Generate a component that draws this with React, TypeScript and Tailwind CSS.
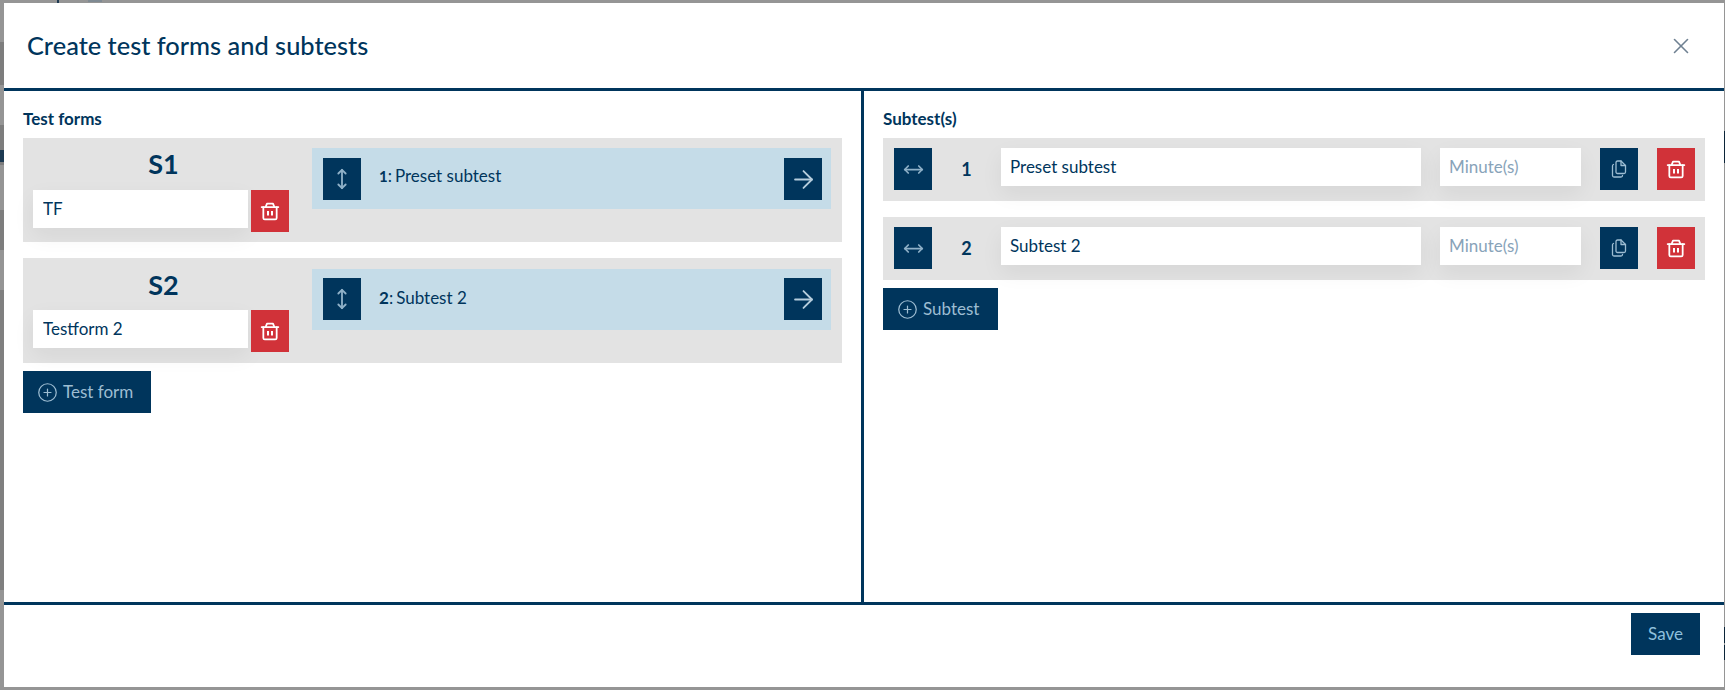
import { ArrowRight, CirclePlus, MoveHorizontal, MoveVertical, X } from "lucide-react";

const font = { fontFamily: '"Lato", "Open Sans", sans-serif' };

function TrashIcon() {
  return (
    <svg width="20" height="20" viewBox="0 0 18 18" fill="none" stroke="#ffffff" strokeWidth="1.6" strokeLinecap="round" strokeLinejoin="round">
      <path d="M1.5 5.5h15" />
      <path d="M5 5.5l1.3-3.2h5.4L13 5.5" />
      <path d="M3 5.5v9.7a1.3 1.3 0 0 0 1.3 1.3h9.4a1.3 1.3 0 0 0 1.3-1.3V5.5" />
      <path d="M7.2 9v4M10.8 9v4" strokeWidth="1.8" strokeLinecap="butt" />
    </svg>
  );
}

function CopyIcon() {
  return (
    <svg width="16" height="18" viewBox="0 0 16 18" fill="none" stroke="#9dbdd2" strokeWidth="1.3" strokeLinecap="round" strokeLinejoin="round">
      <path d="M5 2.5A1.5 1.5 0 0 1 6.5 1H10l4.5 4.5v6.5a1.5 1.5 0 0 1-1.5 1.5H6.5A1.5 1.5 0 0 1 5 12z" />
      <path d="M10 1v4.5h4.5" />
      <path d="M2.5 4.5A1.5 1.5 0 0 0 1.5 6v9.5A1.5 1.5 0 0 0 3 17h7a1.5 1.5 0 0 0 1.5-1.5" />
    </svg>
  );
}

function IconButton({ children, red }: { children: React.ReactNode; red?: boolean }) {
  return (
    <button className={`flex h-[42px] w-[38px] shrink-0 items-center justify-center ${red ? "bg-[#d13239]" : "bg-[#00355c]"}`}>
      {children}
    </button>
  );
}

function TextField({ value, placeholder, className }: { value?: string; placeholder?: string; className: string }) {
  return (
    <input
      readOnly
      value={value}
      placeholder={placeholder}
      style={font}
      className={`h-[38px] bg-white pb-[1px] pl-[9px] text-[17px] text-[#00355c] opacity-100 shadow-[0_8px_22px_rgba(0,0,0,0.06)] outline-none placeholder:text-[#88a3b9] ${className}`}
    />
  );
}

function ActionButton({ label, className }: { label: string; className: string }) {
  return (
    <button className={`mt-[8px] flex h-[42px] items-center bg-[#00355c] pl-[14px] text-[17px] text-[#9dbdd2] ${className}`}>
      <CirclePlus size={21} strokeWidth={1.4} className="mr-[5px]" />
      {label}
    </button>
  );
}

function FormCard({
  code,
  name,
  num,
  subtest,
  second,
}: {
  code: string;
  name: string;
  num: string;
  subtest: string;
  second?: boolean;
}) {
  return (
    <div className={`flex items-start bg-[#e3e3e3] pl-[10px] pr-[11px] ${second ? "mt-[16px] h-[105px]" : "h-[104px]"}`}>
      <div className="w-[256px] shrink-0 pt-[10px]">
        <div className={`h-[42px] pl-[5px] text-center text-[27px] font-bold text-[#00355c] ${second ? "leading-[33px]" : "leading-[31px]"}`}>
          {code}
        </div>
        <div className="flex items-start gap-[3px]">
          <TextField value={name} className="w-[215px] pl-[10px]" />
          <IconButton red>
            <TrashIcon />
          </IconButton>
        </div>
      </div>
      <div className={`ml-[23px] flex h-[61px] flex-1 items-start justify-between bg-[#c5dce8] pl-[11px] pr-[9px] ${second ? "mt-[11px] pt-[9px]" : "mt-[10px] pt-[10px]"}`}>
        <div className="flex items-start">
          <IconButton>
            <MoveVertical size={22} strokeWidth={2} color="#8fb1c8" />
          </IconButton>
          <span className={`ml-[18px] text-[17px] leading-[24px] text-[#00355c] ${second ? "mt-[8px]" : "mt-[6px]"}`}>
            <b className={second ? "text-[17px]" : "text-[15px]"}>{num}</b>:<span className="ml-[3px]">{subtest}</span>
          </span>
        </div>
        <IconButton>
          <ArrowRight size={29} strokeWidth={1.5} color="#b6cedd" />
        </IconButton>
      </div>
    </div>
  );
}

function SubtestRow({ num, name, second }: { num: string; name: string; second?: boolean }) {
  return (
    <div className={`flex h-[63px] items-start bg-[#e3e3e3] pl-[11px] pr-[10px] pt-[10px] ${second ? "mt-[16px]" : ""}`}>
      <IconButton>
        <MoveHorizontal size={21} strokeWidth={2} color="#8fb1c8" />
      </IconButton>
      <div className="w-[69px] shrink-0 text-center text-[18px] font-bold leading-[42px] text-[#00355c]">{num}</div>
      <TextField value={name} className="w-[420px]" />
      <TextField placeholder="Minute(s)" className="ml-[19px] w-[141px]" />
      <div className="ml-[19px] flex gap-[19px]">
        <IconButton>
          <CopyIcon />
        </IconButton>
        <IconButton red>
          <TrashIcon />
        </IconButton>
      </div>
    </div>
  );
}

export default function App() {
  return (
    <div style={font} className="relative h-[690px] w-[1725px] overflow-hidden bg-[#959595] pl-[4px] pt-[3px]">
      {/* page showing behind the modal */}
      <div className="absolute left-0 top-[42px] h-[43px] w-[4px] bg-[#7d7d7d]" />
      <div className="absolute left-0 top-[125px] h-[40px] w-[4px] bg-[#7d7d7d]" />
      <div className="absolute left-0 top-[210px] h-[40px] w-[4px] bg-[#7d7d7d]" />
      <div className="absolute left-0 top-[290px] h-[300px] w-[4px] bg-[#7f7f7f]" />
      <div className="absolute left-0 top-[150px] h-[12px] w-[4px] bg-[#1d3a52]" />
      <div className="absolute left-[57px] top-0 h-[3px] w-[2px] bg-[#1d3a52]" />
      <div className="absolute left-[88px] top-0 h-[2px] w-[14px] bg-[#7f8a93]" />
      <div className="absolute right-0 top-[131px] h-[32px] w-[1px] bg-[#0b2438]" />
      <div className="absolute right-0 top-[627px] h-[16px] w-[1px] bg-[#0b2438]" />
      <div className="absolute right-0 top-[645px] h-[15px] w-[1px] bg-[#0b2438]" />

      <div className="relative flex h-[684px] w-[1720px] flex-col bg-white">
        <header className="flex h-[88px] shrink-0 items-center justify-between border-b-[3px] border-[#00355c] pl-[23px] pr-[30px]">
          <h1 className="pb-[2px] text-[25.4px] font-medium leading-[32px] text-[#00355c]">Create test forms and subtests</h1>
          <X size={26} strokeWidth={1.5} color="#6f8192" />
        </header>
        <main className="flex min-h-0 flex-1">
          <section className="w-[860px] shrink-0 border-r-[3px] border-[#00355c] px-[19px] pt-[18px]">
            <h2 className="mb-[9px] text-[17px] font-bold leading-[20px] text-[#00355c]">Test forms</h2>
            <FormCard code="S1" name="TF" num="1" subtest="Preset subtest" />
            <FormCard code="S2" name="Testform 2" num="2" subtest="Subtest 2" second />
            <ActionButton label="Test form" className="w-[128px]" />
          </section>
          <section className="flex-1 px-[19px] pt-[18px]">
            <h2 className="mb-[9px] text-[17px] font-bold leading-[20px] text-[#00355c]">Subtest(s)</h2>
            <SubtestRow num="1" name="Preset subtest" />
            <SubtestRow num="2" name="Subtest 2" second />
            <ActionButton label="Subtest" className="w-[115px]" />
          </section>
        </main>
        <footer className="flex h-[85px] shrink-0 justify-end border-t-[3px] border-[#00355c] pr-[24px] pt-[8px]">
          <button className="h-[42px] w-[69px] bg-[#00355c] text-[17px] text-[#8fc0dd]">Save</button>
        </footer>
      </div>
    </div>
  );
}
